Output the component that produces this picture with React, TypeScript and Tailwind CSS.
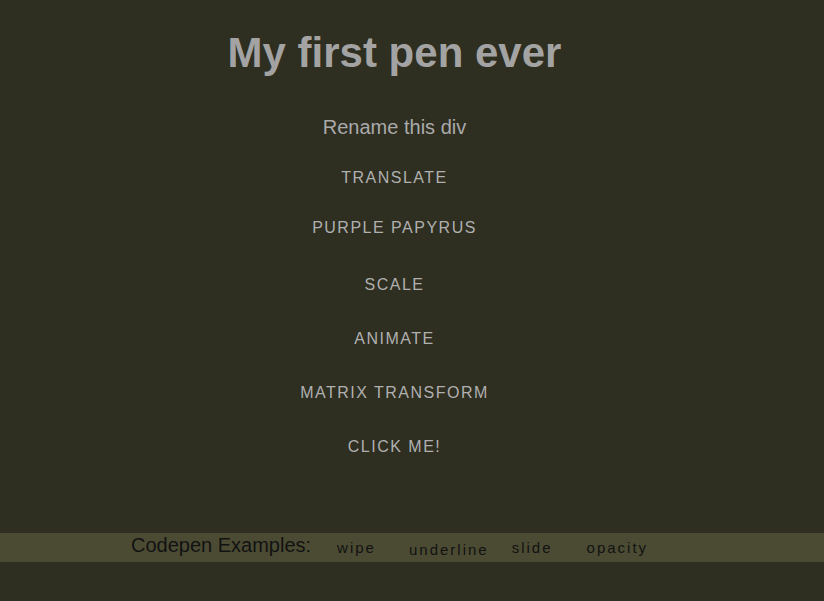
import React from "react";

const navItems = [
  { label: "TRANSLATE", top: "mt-[29px]" },
  { label: "PURPLE PAPYRUS", top: "mt-[30px]" },
  { label: "SCALE", top: "mt-[37px]" },
  { label: "ANIMATE", top: "mt-[34px]" },
  { label: "MATRIX TRANSFORM", top: "mt-[34px]" },
  { label: "CLICK ME!", top: "mt-[34px]" },
];

export default function App() {
  return (
    <div
      className="min-h-[601px] w-full bg-[#2e2e21] flex flex-col"
      style={{ fontFamily: '"Liberation Sans", Arial, sans-serif' }}
    >
      <div className="w-[789px] flex flex-col items-center text-center">
        <h1 className="pt-[29px] text-[42px] leading-[48px] font-bold text-[#a3a3a3]">
          My first pen ever
        </h1>
        <div className="mt-[38px] text-[20px] leading-[24px] text-[#aaaaaa]">
          Rename this div
        </div>
        {navItems.map((item) => (
          <div
            key={item.label}
            className={`${item.top} text-[16px] leading-[20px] tracking-[1.5px] text-[#b0b0b0]`}
          >
            {item.label}
          </div>
        ))}
      </div>
      <div className="mt-[76px] h-[29px] w-full bg-[#4b4b33] flex items-start text-[#121212]">
        <span className="ml-[131px] mt-[1px] text-[20px] leading-[23px]">Codepen Examples:</span>
        <span className="ml-[26px] mt-[6px] text-[15px] leading-[17px] tracking-[2px]">wipe</span>
        <span className="ml-[33px] mt-[8px] text-[15px] leading-[17px] tracking-[2px]">underline</span>
        <span className="ml-[23px] mt-[6px] text-[15px] leading-[17px] tracking-[2px]">slide</span>
        <span className="ml-[34px] mt-[6px] text-[15px] leading-[17px] tracking-[2px]">opacity</span>
      </div>
    </div>
  );
}
